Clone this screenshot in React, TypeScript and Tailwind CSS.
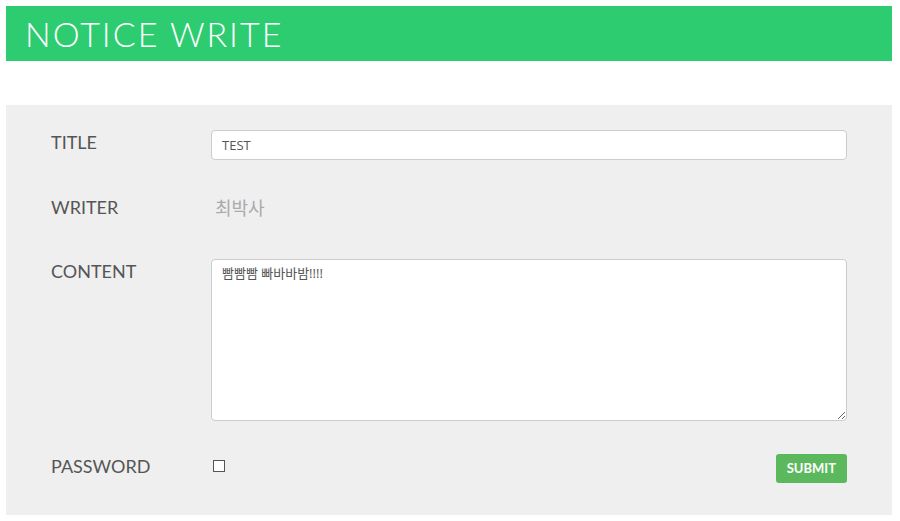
export default function App() {
  return (
    <div className="min-h-[521px] bg-white pt-[6px] pl-[6px] pr-[8px] font-['Lato','Noto_Sans_CJK_KR',sans-serif]">
      <div className="h-[55px] bg-[#2ecc71] flex items-center pl-[19px]">
        <h1 className="text-[34px] font-light text-white leading-none tracking-[2px]">NOTICE WRITE</h1>
      </div>

      <form className="mt-[44px] bg-[#efefef] px-[45px] pt-[25px] pb-[32px] text-[#555]">
        <div className="flex items-start">
          <label className="w-[160px] text-[18px] leading-[24px]">TITLE</label>
          <input
            readOnly
            defaultValue="TEST"
            className="flex-1 h-[30px] rounded-[4px] border border-[#ccc] bg-white px-[10px] text-[13px] text-[#555] outline-none font-['Open_Sans','Noto_Sans_CJK_KR',sans-serif]"
          />
        </div>

        <div className="flex items-start mt-[35px]">
          <label className="w-[160px] text-[18px] leading-[24px]">WRITER</label>
          <span className="pl-[4px] text-[18px] leading-[24px] text-[#aaa] font-['Noto_Sans_CJK_KR',sans-serif]">최박사</span>
        </div>

        <div className="flex items-start mt-[40px]">
          <label className="w-[160px] text-[18px] leading-[24px]">CONTENT</label>
          <textarea
            readOnly
            defaultValue="빰빰빰 빠바바밤!!!!"
            className="flex-1 h-[162px] rounded-[4px] border border-[#ccc] bg-white px-[10px] py-[4px] text-[13px] text-[#555] outline-none font-['Open_Sans','Noto_Sans_CJK_KR',sans-serif]"
          />
        </div>

        <div className="flex items-start mt-[33px]">
          <label className="w-[160px] text-[18px] leading-[24px]">PASSWORD</label>
          <div className="flex-1 flex items-start justify-between">
            <span className="mt-[6px] ml-[2px] w-[12px] h-[12px] border border-[#555] bg-white" />
            <button
              type="button"
              className="h-[29px] px-[11px] rounded-[3px] bg-[#5cb85c] text-white text-[13px] font-bold"
            >
              SUBMIT
            </button>
          </div>
        </div>
      </form>
    </div>
  )
}
